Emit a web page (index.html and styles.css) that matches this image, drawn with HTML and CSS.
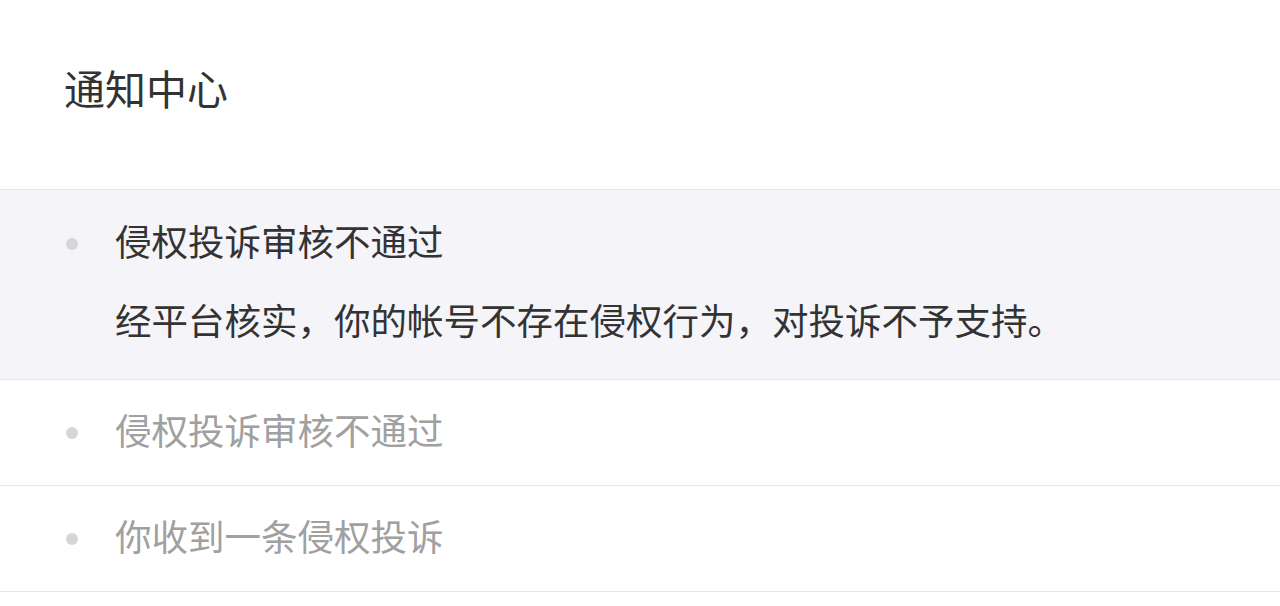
FILE: index.html
```html
<!DOCTYPE html>
<html lang="zh-CN">
<head>
<meta charset="utf-8">
<title>通知中心</title>
<link rel="stylesheet" href="styles.css">
</head>
<body>
<header class="header">
  <h1 class="header-title">通知中心</h1>
</header>
<ul class="notice-list">
  <li class="notice notice-active">
    <span class="notice-dot"></span>
    <div class="notice-body">
      <div class="notice-title">侵权投诉审核不通过</div>
      <div class="notice-desc">经平台核实，你的帐号不存在侵权行为，对投诉不予支持。</div>
    </div>
  </li>
  <li class="notice">
    <span class="notice-dot"></span>
    <div class="notice-body">
      <div class="notice-title">侵权投诉审核不通过</div>
    </div>
  </li>
  <li class="notice">
    <span class="notice-dot"></span>
    <div class="notice-body">
      <div class="notice-title">你收到一条侵权投诉</div>
    </div>
  </li>
</ul>
</body>
</html>
```

FILE: styles.css
```css
html, body {
  margin: 0;
  padding: 0;
  background: #ffffff;
}

body {
  font-family: "Noto Sans CJK SC", "Noto Sans", sans-serif;
  color: #333333;
}

.header {
  padding: 67px 0 81px 64px;
  border-bottom: 1px solid #e6e6e6;
}

.header-title {
  margin: 0;
  font-size: 41px;
  line-height: 41px;
  font-weight: 400;
  color: #333333;
}

.notice-list {
  list-style: none;
  margin: 0;
  padding: 0;
}

.notice {
  display: flex;
  align-items: flex-start;
  gap: 37px;
  padding: 32px 0 37px 66px;
  border-bottom: 1px solid #e6e6e6;
  color: #a0a0a0;
}

.notice-active {
  background: #f4f4f9;
  padding-top: 33px;
  padding-bottom: 41px;
  color: #333333;
}

.notice-dot {
  flex: none;
  width: 12px;
  height: 12px;
  margin-top: 15px;
  border-radius: 50%;
  background: #d6d6d6;
}

.notice-body {
  display: flex;
  flex-direction: column;
  gap: 43px;
}

.notice-title,
.notice-desc {
  font-size: 36.5px;
  line-height: 36px;
}
```
